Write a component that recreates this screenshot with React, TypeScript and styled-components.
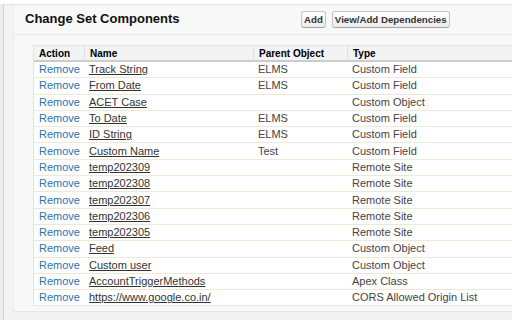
import styled, { createGlobalStyle } from "styled-components";

type Component = {
  name: string;
  parent: string;
  type: string;
};

const components: Component[] = [
  { name: "Track String", parent: "ELMS", type: "Custom Field" },
  { name: "From Date", parent: "ELMS", type: "Custom Field" },
  { name: "ACET Case", parent: "", type: "Custom Object" },
  { name: "To Date", parent: "ELMS", type: "Custom Field" },
  { name: "ID String", parent: "ELMS", type: "Custom Field" },
  { name: "Custom Name", parent: "Test", type: "Custom Field" },
  { name: "temp202309", parent: "", type: "Remote Site" },
  { name: "temp202308", parent: "", type: "Remote Site" },
  { name: "temp202307", parent: "", type: "Remote Site" },
  { name: "temp202306", parent: "", type: "Remote Site" },
  { name: "temp202305", parent: "", type: "Remote Site" },
  { name: "Feed", parent: "", type: "Custom Object" },
  { name: "Custom user", parent: "", type: "Custom Object" },
  { name: "AccountTriggerMethods", parent: "", type: "Apex Class" },
  { name: "https://www.google.co.in/", parent: "", type: "CORS Allowed Origin List" },
];

const GlobalStyle = createGlobalStyle`
  html, body {
    margin: 0;
    padding: 0;
    overflow: hidden;
    background: #ffffff;
  }
  body {
    font-family: "Liberation Sans", Arial, sans-serif;
  }
`;

const App = () => {
  return (
    <>
      <GlobalStyle />
      <Page>
        <Shell>
          <Panel>
            {/* header with title + buttons */}
            <PanelHeader>
              <Title>Change Set Components</Title>
              <ButtonBar>
                <Button>Add</Button>
                <Button>View/Add Dependencies</Button>
              </ButtonBar>
            </PanelHeader>

            <PanelBody>
              <ListTable>
                <colgroup>
                  <col style={{ width: 50 }} />
                  <col style={{ width: 169 }} />
                  <col style={{ width: 94 }} />
                  <col />
                </colgroup>
                <thead>
                  <HeaderRow>
                    <Th>Action</Th>
                    <Th $sep>Name</Th>
                    <Th $sep>Parent Object</Th>
                    <Th $sep>Type</Th>
                  </HeaderRow>
                </thead>
                <tbody>
                  {components.map((c) => (
                    <Row key={c.name}>
                      <Td>
                        <ActionLink>Remove</ActionLink>
                      </Td>
                      <Td>
                        <NameLink>{c.name}</NameLink>
                      </Td>
                      <Td>{c.parent}</Td>
                      <Td>{c.type}</Td>
                    </Row>
                  ))}
                </tbody>
              </ListTable>
            </PanelBody>
          </Panel>
        </Shell>
      </Page>
    </>
  );
};

const Page = styled.div`
  height: 320px;
  box-sizing: border-box;
  border-top: 4px solid #ffffff;
  background: #ececec;
  padding-left: 3px;
`;

const Shell = styled.div`
  height: 100%;
  box-sizing: border-box;
  border-left: 1px solid #d2d2d2;
  border-top: 1px solid #e2e2e2;
  background: #f3f3f3;
  padding-left: 9px;
`;

const Panel = styled.div`
  background: #f8f8f8;
  border-left: 1px solid #ececec;
  border-bottom: 1px solid #e6e6e6;
`;

const PanelHeader = styled.div`
  display: flex;
  align-items: center;
  height: 29px;
  padding-left: 11px;
  border-bottom: 1px solid #e6e6e6;
`;

const Title = styled.h2`
  margin: -2px 0 0;
  width: 276px;
  font-size: 13px;
  font-weight: bold;
  color: #111;
`;

const ButtonBar = styled.div`
  display: flex;
  gap: 6px;
`;

const Button = styled.button`
  height: 17px;
  padding: 0 2px;
  font-family: "Liberation Sans", Arial, sans-serif;
  font-size: 9.7px;
  font-weight: bold;
  color: #333;
  background: linear-gradient(#ffffff, #ececec);
  border: 1px solid #c4c4c4;
  border-bottom-color: #a5a5a5;
  border-radius: 3px;
  cursor: pointer;
`;

const PanelBody = styled.div`
  padding: 10px 0 5px 19px;
`;

const ListTable = styled.table`
  width: 100%;
  table-layout: fixed;
  border-collapse: separate;
  border-spacing: 0;
  background: #ffffff;
  border-left: 1px solid #e0e3e5;
`;

const HeaderRow = styled.tr`
  height: 17px;
  background: #f2f3f3;
`;

const Th = styled.th<{ $sep?: boolean }>`
  padding: 0 0 0 5px;
  text-align: left;
  font-size: 10px;
  font-weight: bold;
  color: #000;
  border-top: 1px solid #e0e3e5;
  border-bottom: 2px solid #cccccc;
  border-left: ${({ $sep }) => ($sep ? "1px solid #dfe0e1" : "none")};
  white-space: nowrap;
`;

const Row = styled.tr`
  height: 16.3px;
`;

const Td = styled.td`
  padding: 0 0 0 5px;
  font-size: 11px;
  line-height: 13px;
  color: #444;
  border-bottom: 1px solid #ece9d4;
  white-space: nowrap;
`;

const ActionLink = styled.a`
  color: #2e6fae;
  text-decoration: none;
  cursor: pointer;
`;

const NameLink = styled.a`
  color: #333;
  text-decoration: underline;
  cursor: pointer;
`;

export default App;
